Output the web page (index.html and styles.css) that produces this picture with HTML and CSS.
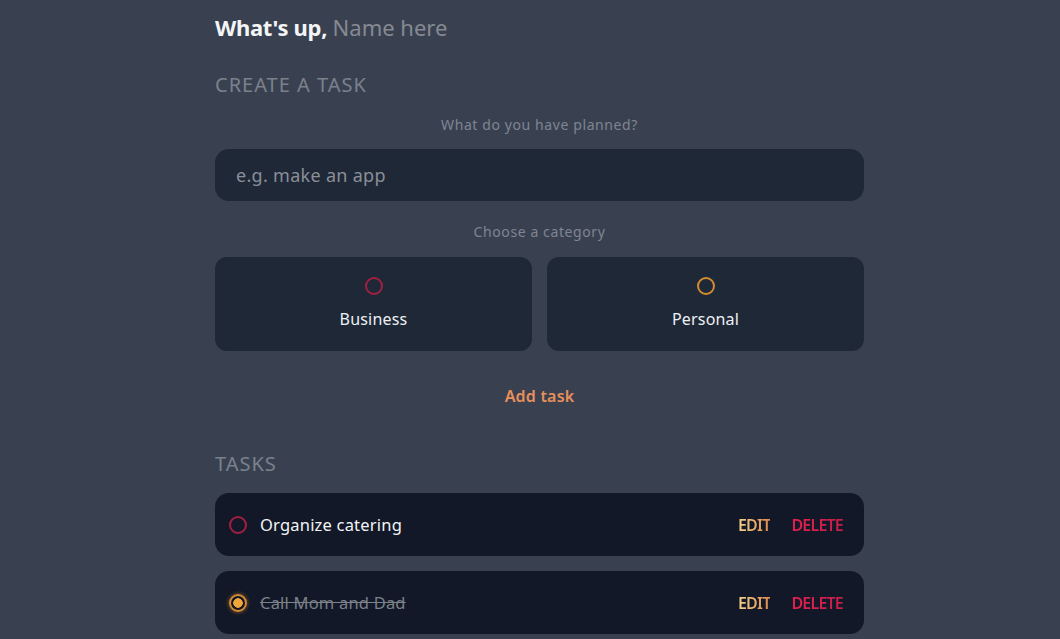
FILE: index.html
```html
<!DOCTYPE html>
<html lang="en">
<head>
<meta charset="utf-8">
<title>Todo</title>
<link rel="stylesheet" href="styles.css">
</head>
<body>
<main class="app">
  <section class="greeting">
    <h2 class="title">What's up, <span class="name">Name here</span></h2>
  </section>

  <section class="create">
    <h3 class="heading">CREATE A TASK</h3>
    <h4 class="label">What do you have planned?</h4>
    <div class="input">e.g. make an app</div>

    <h4 class="label label-cat">Choose a category</h4>
    <div class="options">
      <div class="option">
        <span class="bubble business"></span>
        <span class="opt-text">Business</span>
      </div>
      <div class="option">
        <span class="bubble personal"></span>
        <span class="opt-text">Personal</span>
      </div>
    </div>

    <div class="submit">Add task</div>
  </section>

  <section class="list">
    <h3 class="heading">TASKS</h3>
    <div class="items">
      <div class="item">
        <span class="bubble business small"></span>
        <span class="item-text">Organize catering</span>
        <span class="actions"><span class="edit">EDIT</span><span class="delete">DELETE</span></span>
      </div>
      <div class="item done">
        <span class="bubble personal small checked"></span>
        <span class="item-text">Call Mom and Dad</span>
        <span class="actions"><span class="edit">EDIT</span><span class="delete">DELETE</span></span>
      </div>
    </div>
  </section>
</main>
</body>
</html>
```

FILE: styles.css
```css
* { box-sizing: border-box; margin: 0; padding: 0; }

html, body {
  background: #394151;
  height: 100%;
  overflow: hidden;
}

body {
  font-family: "Noto Sans", "DejaVu Sans", sans-serif;
  color: #ffffff;
  display: flex;
  justify-content: center;
  padding-left: 19px;
}

.app {
  width: 649px;
  padding-top: 12px;
}

.title {
  font-size: 22px;
  font-weight: 700;
  letter-spacing: -0.3px;
  line-height: 30px;
  color: #f4f5f7;
}
.name {
  font-weight: 400;
  letter-spacing: 0;
  color: #868a92;
}

.heading {
  font-size: 20px;
  font-weight: 400;
  line-height: 26px;
  color: #7b818c;
  letter-spacing: 1px;
}

.create { margin-top: 30px; }

.label {
  font-size: 14px;
  font-weight: 400;
  color: #7f8591;
  text-align: center;
  line-height: 18px;
  letter-spacing: 0.6px;
  margin-top: 18px;
}

.input {
  margin-top: 15px;
  height: 52px;
  border-radius: 14px;
  background: #1f2837;
  color: #8a8f98;
  font-size: 18px;
  letter-spacing: 0.3px;
  display: flex;
  align-items: center;
  padding-left: 21px;
}

.label-cat { margin-top: 22px; }

.options {
  margin-top: 16px;
  display: grid;
  grid-template-columns: 1fr 1fr;
  gap: 15px;
}

.option {
  height: 94px;
  border-radius: 12px;
  background: #1f2837;
  display: flex;
  flex-direction: column;
  align-items: center;
  padding-top: 20px;
}

.bubble {
  display: block;
  width: 18px;
  height: 18px;
  border-radius: 50%;
  border: 2px solid #8c1d3d;
  flex-shrink: 0;
}
.bubble.personal { border-color: #d28b30; }
.bubble.business { border-color: #a31f42; }

.opt-text {
  margin-top: 14px;
  font-size: 16px;
  letter-spacing: 0.2px;
  color: #eef0f4;
  line-height: 20px;
}

.submit {
  margin-top: 33px;
  text-align: center;
  font-size: 16px;
  font-weight: 600;
  letter-spacing: 0.2px;
  color: #e88f5a;
  line-height: 24px;
}

.list { margin-top: 43px; }

.items {
  margin-top: 16px;
  display: flex;
  flex-direction: column;
  gap: 15px;
}

.item {
  height: 63px;
  border-radius: 14px;
  background: #121827;
  display: flex;
  align-items: center;
  padding: 0 21px 0 14px;
}

.bubble.small { width: 18px; height: 18px; }
.bubble.checked {
  border-color: #d98b2f;
  box-shadow: 0 0 4px rgba(230, 150, 50, 0.6);
  background: radial-gradient(circle, #f0a63a 0 4.5px, transparent 5px);
}

.item-text {
  margin-left: 13px;
  font-size: 16.5px;
  letter-spacing: 0.2px;
  color: #f3f4f6;
  flex: 1;
}
.done .item-text {
  color: #7c818a;
  text-decoration: line-through;
}

.actions {
  display: flex;
  gap: 21px;
  font-size: 16px;
  font-weight: 600;
  letter-spacing: -0.8px;
}
.edit {
  background: linear-gradient(90deg, #f3d48c, #e0894e);
  -webkit-background-clip: text;
  background-clip: text;
  color: transparent;
}
.delete {
  background: linear-gradient(90deg, #e0204f, #c61f4a);
  -webkit-background-clip: text;
  background-clip: text;
  color: transparent;
}
```
